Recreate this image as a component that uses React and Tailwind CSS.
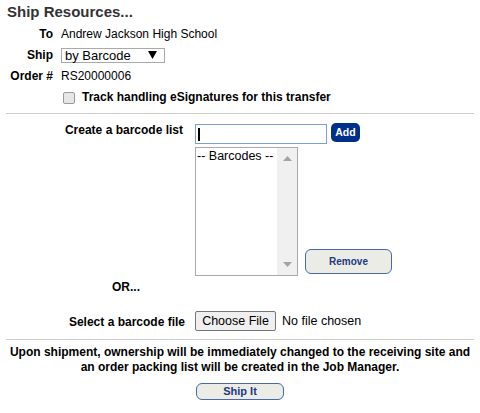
import React from 'react';

const Caret = () => (
  <svg width="9" height="8" viewBox="0 0 9 8" className="block">
    <polygon points="0,0 9,0 4.5,8" fill="#000" />
  </svg>
);

const Arrow = ({ up }) => (
  <svg width="9" height="5" viewBox="0 0 9 5" className="block">
    <polygon points={up ? '0,5 9,5 4.5,0' : '0,0 9,0 4.5,5'} fill="#a3a3a3" />
  </svg>
);

const PillButton = ({ children, className = '' }) => (
  <button className={`rounded-[6px] border border-[#4a67a8] bg-[#ecece6] font-bold text-[#1d3a7e] leading-none ${className}`}>
    {children}
  </button>
);

export default function App() {
  return (
    <div className="w-[480px] h-[413px] bg-white px-[6px] font-['Liberation_Sans',Arial,sans-serif] text-[12px] text-black">
      <h1 className="pt-[3px] pl-[1px] text-[15px] leading-[18px] font-bold text-[#333]">Ship Resources...</h1>

      {/* header fields */}
      <div className="mt-[2px] grid grid-cols-[47px_1fr] gap-x-[8px]">
        <div className="h-[21px] flex items-center justify-end font-bold">To</div>
        <div className="h-[21px] flex items-center">Andrew Jackson High School</div>

        <div className="h-[21px] flex items-center justify-end font-bold">Ship</div>
        <div className="h-[21px] flex items-center">
          <div className="w-[104px] h-[15px] mt-[1px] border border-[#a9a9a9] flex items-center justify-between pl-[3px] pr-[7px] text-[13px] leading-none">
            <span>by Barcode</span>
            <Caret />
          </div>
        </div>

        <div className="h-[21px] flex items-center justify-end font-bold">Order #</div>
        <div className="h-[21px] flex items-center">RS20000006</div>

        <div className="h-[22px]" />
        <div className="h-[22px] flex items-center pl-[2px]">
          <span className="w-[12px] h-[12px] mt-[2px] rounded-[2px] border border-[#9a9a9a] bg-[#e6e6e6]" />
          <span className="ml-[7px] font-bold">Track handling eSignatures for this transfer</span>
        </div>
      </div>

      <div className="mt-[5px] border-t border-[#cccccc]" />

      {/* barcode list */}
      <div className="flex pt-[8px]">
        <div className="w-[177px] pt-[1px] text-right font-bold leading-[14px]">Create a barcode list</div>
        <div className="ml-[12px] flex flex-col">
          <div className="flex items-start gap-[4px]">
            <div className="w-[132px] h-[20px] mt-[2px] border border-[#7b9fd9] bg-white flex items-center pl-[2px]">
              <span className="w-[2px] h-[13px] bg-black" />
            </div>
            <button className="w-[29px] h-[19px] mt-[1px] rounded-[5px] bg-[#003087] text-white font-bold text-[10.5px] leading-none">Add</button>
          </div>
          <div className="mt-[3px] flex items-end">
            <div className="w-[103px] h-[129px] border border-[#a9a9a9] flex">
              <div className="flex-1 pl-[1px] pt-[1px] text-[12.5px] leading-[14px]">-- Barcodes --</div>
              <div className="w-[20px] bg-[#f0f0f0] flex flex-col items-center justify-between py-[8px]">
                <Arrow up />
                <Arrow />
              </div>
            </div>
            <PillButton className="ml-[7px] mb-[2px] w-[87px] h-[25px] text-[10px]">Remove</PillButton>
          </div>
        </div>
      </div>

      <div className="mt-[4px] pl-[106px] font-bold leading-[14px]">OR...</div>

      {/* file */}
      <div className="mt-[17px] flex items-center">
        <div className="w-[179px] text-right font-bold leading-[14px] mt-[1px]">Select a barcode file</div>
        <div className="ml-[10px] flex items-center text-[12.5px]">
          <button className="w-[81px] h-[20px] rounded-[2px] border border-[#767676] bg-[#efefef] leading-none">Choose File</button>
          <span className="ml-[6px]">No file chosen</span>
        </div>
      </div>

      <div className="mt-[8px] border-t border-[#cccccc]" />

      <p className="pt-[5px] text-center font-bold leading-[15px]">
        Upon shipment, ownership will be immediately changed to the receiving site and
        <br />
        an order packing list will be created in the Job Manager.
      </p>

      <div className="mt-[8px] flex justify-center">
        <PillButton className="w-[88px] h-[17px] text-[11px]">Ship It</PillButton>
      </div>
    </div>
  );
}
